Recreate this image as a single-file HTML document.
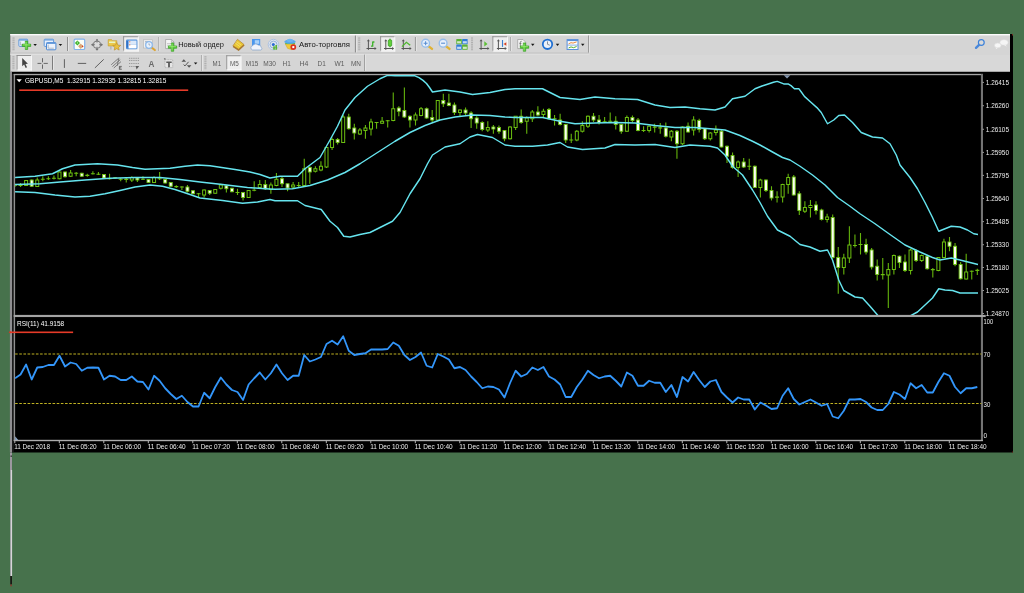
<!DOCTYPE html><html><head><meta charset="utf-8"><title>chart</title><style>
html,body{margin:0;padding:0;background:#47724c;width:1024px;height:593px;overflow:hidden}
svg{display:block;position:absolute;left:0;top:0;filter:blur(0.45px)}
text{font-family:"Liberation Sans",sans-serif}
</style></head><body>
<svg width="1024" height="593" viewBox="0 0 1024 593">
<rect x="0" y="0" width="1024" height="593" fill="#47724c"/>
<rect x="10" y="34" width="1003" height="418.5" fill="#000"/>
<rect x="10" y="452.5" width="2" height="18" fill="#9c98a0"/>
<rect x="10" y="470" width="0.8" height="106" fill="#97959b"/>
<rect x="10.7" y="470" width="1.4" height="106" fill="#d8d5d9"/>
<rect x="10.3" y="576" width="1.6" height="8.5" fill="#141010"/>
<rect x="10.3" y="584.5" width="1.6" height="1.8" fill="#8a3a30"/>
<rect x="10.6" y="455.5" width="1.2" height="1.4" fill="#222"/>
<rect x="10.2" y="34" width="999.8" height="38" fill="#d5d5d5"/>
<rect x="10.2" y="34" width="999.8" height="1.4" fill="#fbfbfb"/>
<rect x="10.2" y="52.4" width="578.6" height="1.4" fill="#c5c5c5"/>
<rect x="10.2" y="53.8" width="579.4" height="1" fill="#e3e3e3"/>
<rect x="365.6" y="54.8" width="644.4" height="16.4" fill="#d8d8d8"/>
<rect x="10.2" y="71.2" width="999.8" height="0.8" fill="#9a9a9a"/>
<rect x="1012" y="34" width="1" height="1.5" fill="#7a2a20"/>
<rect x="1012.1" y="451.6" width="0.9" height="0.9" fill="#8a2218"/>
<rect x="9.9" y="72" width="2.1" height="380.5" fill="#8f8e91"/>
<rect x="12" y="74" width="1.8" height="378" fill="#1b1b1b"/>
<rect x="13.7" y="74" width="1.4" height="367" fill="#909090"/>
<rect x="13.7" y="73.85" width="969.3" height="1.35" fill="#a6a6a6"/>
<rect x="980.9" y="74" width="2.1" height="367" fill="#747474"/>
<rect x="13.7" y="439.8" width="969.3" height="1.4" fill="#acacac"/>
<rect x="13.7" y="314.9" width="972" height="2.15" fill="#a4a4a4"/>
<defs><clipPath id="cm"><rect x="15.1" y="75.1" width="966.3" height="239.9"/></clipPath>
<clipPath id="cr"><rect x="15.1" y="317" width="966.3" height="122.9"/></clipPath></defs>
<g clip-path="url(#cm)" shape-rendering="auto">
<line x1="15.00" y1="183.75" x2="15.00" y2="187.00" stroke="#64b40c" stroke-width="1.1"/>
<line x1="13.00" y1="185.12" x2="17.00" y2="185.12" stroke="#6cc010" stroke-width="1.05"/>
<line x1="20.56" y1="183.00" x2="20.56" y2="187.00" stroke="#64b40c" stroke-width="1.1"/>
<line x1="18.56" y1="185.38" x2="22.56" y2="185.38" stroke="#6cc010" stroke-width="1.05"/>
<line x1="26.12" y1="180.00" x2="26.12" y2="186.00" stroke="#64b40c" stroke-width="1.1"/>
<rect x="24.62" y="180.50" width="3" height="5.00" fill="#000" stroke="#6cc010" stroke-width="1"/>
<line x1="31.69" y1="179.50" x2="31.69" y2="186.75" stroke="#64b40c" stroke-width="1.1"/>
<rect x="30.19" y="180.00" width="3" height="6.25" fill="#fcfff4" stroke="#6cc010" stroke-width="0.9"/>
<line x1="37.25" y1="177.50" x2="37.25" y2="187.00" stroke="#64b40c" stroke-width="1.1"/>
<rect x="35.75" y="180.00" width="3" height="6.50" fill="#000" stroke="#6cc010" stroke-width="1"/>
<line x1="42.81" y1="176.25" x2="42.81" y2="181.25" stroke="#64b40c" stroke-width="1.1"/>
<line x1="40.81" y1="179.25" x2="44.81" y2="179.25" stroke="#6cc010" stroke-width="1.05"/>
<line x1="48.38" y1="176.25" x2="48.38" y2="180.00" stroke="#64b40c" stroke-width="1.1"/>
<line x1="46.38" y1="178.75" x2="50.38" y2="178.75" stroke="#6cc010" stroke-width="1.05"/>
<line x1="53.94" y1="175.50" x2="53.94" y2="179.50" stroke="#64b40c" stroke-width="1.1"/>
<line x1="51.94" y1="178.25" x2="55.94" y2="178.25" stroke="#6cc010" stroke-width="1.05"/>
<line x1="59.50" y1="171.50" x2="59.50" y2="179.25" stroke="#64b40c" stroke-width="1.1"/>
<rect x="58.00" y="172.00" width="3" height="6.75" fill="#000" stroke="#6cc010" stroke-width="1"/>
<line x1="65.06" y1="171.50" x2="65.06" y2="177.50" stroke="#64b40c" stroke-width="1.1"/>
<rect x="63.56" y="172.00" width="3" height="4.75" fill="#fcfff4" stroke="#6cc010" stroke-width="0.9"/>
<line x1="70.62" y1="170.00" x2="70.62" y2="177.00" stroke="#64b40c" stroke-width="1.1"/>
<rect x="69.12" y="173.00" width="3" height="3.25" fill="#000" stroke="#6cc010" stroke-width="1"/>
<line x1="76.19" y1="172.00" x2="76.19" y2="176.25" stroke="#64b40c" stroke-width="1.1"/>
<line x1="74.19" y1="173.25" x2="78.19" y2="173.25" stroke="#6cc010" stroke-width="1.05"/>
<line x1="81.75" y1="172.75" x2="81.75" y2="176.75" stroke="#64b40c" stroke-width="1.1"/>
<rect x="80.25" y="173.25" width="3" height="3.00" fill="#fcfff4" stroke="#6cc010" stroke-width="0.9"/>
<line x1="87.31" y1="173.75" x2="87.31" y2="176.75" stroke="#64b40c" stroke-width="1.1"/>
<line x1="85.31" y1="175.38" x2="89.31" y2="175.38" stroke="#6cc010" stroke-width="1.05"/>
<line x1="92.88" y1="171.25" x2="92.88" y2="174.50" stroke="#64b40c" stroke-width="1.1"/>
<line x1="90.88" y1="173.75" x2="94.88" y2="173.75" stroke="#6cc010" stroke-width="1.05"/>
<line x1="98.44" y1="172.00" x2="98.44" y2="175.00" stroke="#64b40c" stroke-width="1.1"/>
<line x1="96.44" y1="174.25" x2="100.44" y2="174.25" stroke="#6cc010" stroke-width="1.05"/>
<line x1="104.00" y1="174.00" x2="104.00" y2="178.50" stroke="#64b40c" stroke-width="1.1"/>
<rect x="102.50" y="174.50" width="3" height="3.50" fill="#fcfff4" stroke="#6cc010" stroke-width="0.9"/>
<line x1="109.56" y1="173.75" x2="109.56" y2="179.50" stroke="#64b40c" stroke-width="1.1"/>
<line x1="107.56" y1="178.75" x2="111.56" y2="178.75" stroke="#6cc010" stroke-width="1.05"/>
<line x1="115.12" y1="177.00" x2="115.12" y2="178.50" stroke="#64b40c" stroke-width="1.1"/>
<line x1="113.12" y1="177.75" x2="117.12" y2="177.75" stroke="#6cc010" stroke-width="1.05"/>
<line x1="120.69" y1="178.00" x2="120.69" y2="181.25" stroke="#64b40c" stroke-width="1.1"/>
<line x1="118.69" y1="179.25" x2="122.69" y2="179.25" stroke="#6cc010" stroke-width="1.05"/>
<line x1="126.25" y1="177.00" x2="126.25" y2="182.50" stroke="#64b40c" stroke-width="1.1"/>
<line x1="124.25" y1="179.38" x2="128.25" y2="179.38" stroke="#6cc010" stroke-width="1.05"/>
<line x1="131.81" y1="176.25" x2="131.81" y2="182.00" stroke="#64b40c" stroke-width="1.1"/>
<rect x="130.31" y="177.50" width="3" height="2.50" fill="#000" stroke="#6cc010" stroke-width="1"/>
<line x1="137.38" y1="177.00" x2="137.38" y2="182.00" stroke="#64b40c" stroke-width="1.1"/>
<rect x="135.88" y="178.00" width="3" height="2.00" fill="#fcfff4" stroke="#6cc010" stroke-width="0.9"/>
<line x1="142.94" y1="176.25" x2="142.94" y2="180.00" stroke="#64b40c" stroke-width="1.1"/>
<line x1="140.94" y1="179.25" x2="144.94" y2="179.25" stroke="#6cc010" stroke-width="1.05"/>
<line x1="148.50" y1="179.00" x2="148.50" y2="183.00" stroke="#64b40c" stroke-width="1.1"/>
<rect x="147.00" y="179.50" width="3" height="3.00" fill="#fcfff4" stroke="#6cc010" stroke-width="0.9"/>
<line x1="154.06" y1="176.25" x2="154.06" y2="183.00" stroke="#64b40c" stroke-width="1.1"/>
<rect x="152.56" y="177.50" width="3" height="5.00" fill="#000" stroke="#6cc010" stroke-width="1"/>
<line x1="159.62" y1="172.00" x2="159.62" y2="180.00" stroke="#64b40c" stroke-width="1.1"/>
<line x1="157.62" y1="178.75" x2="161.62" y2="178.75" stroke="#6cc010" stroke-width="1.05"/>
<line x1="165.19" y1="179.00" x2="165.19" y2="183.50" stroke="#64b40c" stroke-width="1.1"/>
<rect x="163.69" y="179.50" width="3" height="3.50" fill="#fcfff4" stroke="#6cc010" stroke-width="0.9"/>
<line x1="170.75" y1="182.00" x2="170.75" y2="186.75" stroke="#64b40c" stroke-width="1.1"/>
<rect x="169.25" y="182.50" width="3" height="3.75" fill="#fcfff4" stroke="#6cc010" stroke-width="0.9"/>
<line x1="176.31" y1="185.25" x2="176.31" y2="188.00" stroke="#64b40c" stroke-width="1.1"/>
<line x1="174.31" y1="186.62" x2="178.31" y2="186.62" stroke="#6cc010" stroke-width="1.05"/>
<line x1="181.88" y1="186.25" x2="181.88" y2="190.00" stroke="#64b40c" stroke-width="1.1"/>
<line x1="179.88" y1="187.00" x2="183.88" y2="187.00" stroke="#6cc010" stroke-width="1.05"/>
<line x1="187.44" y1="185.00" x2="187.44" y2="192.50" stroke="#64b40c" stroke-width="1.1"/>
<rect x="185.94" y="187.00" width="3" height="4.25" fill="#fcfff4" stroke="#6cc010" stroke-width="0.9"/>
<line x1="193.00" y1="190.25" x2="193.00" y2="194.25" stroke="#64b40c" stroke-width="1.1"/>
<rect x="191.50" y="190.75" width="3" height="3.00" fill="#fcfff4" stroke="#6cc010" stroke-width="0.9"/>
<line x1="198.56" y1="193.00" x2="198.56" y2="197.50" stroke="#64b40c" stroke-width="1.1"/>
<line x1="196.56" y1="193.75" x2="200.56" y2="193.75" stroke="#6cc010" stroke-width="1.05"/>
<line x1="204.12" y1="189.50" x2="204.12" y2="197.50" stroke="#64b40c" stroke-width="1.1"/>
<rect x="202.62" y="190.00" width="3" height="5.00" fill="#000" stroke="#6cc010" stroke-width="1"/>
<line x1="209.69" y1="190.00" x2="209.69" y2="195.00" stroke="#64b40c" stroke-width="1.1"/>
<rect x="208.19" y="190.50" width="3" height="2.75" fill="#fcfff4" stroke="#6cc010" stroke-width="0.9"/>
<line x1="215.25" y1="189.00" x2="215.25" y2="193.75" stroke="#64b40c" stroke-width="1.1"/>
<rect x="213.75" y="189.50" width="3" height="3.75" fill="#000" stroke="#6cc010" stroke-width="1"/>
<line x1="220.81" y1="183.75" x2="220.81" y2="189.50" stroke="#64b40c" stroke-width="1.1"/>
<rect x="219.31" y="185.00" width="3" height="3.25" fill="#000" stroke="#6cc010" stroke-width="1"/>
<line x1="226.38" y1="185.00" x2="226.38" y2="192.50" stroke="#64b40c" stroke-width="1.1"/>
<rect x="224.88" y="185.75" width="3" height="3.00" fill="#fcfff4" stroke="#6cc010" stroke-width="0.9"/>
<line x1="231.94" y1="187.75" x2="231.94" y2="192.25" stroke="#64b40c" stroke-width="1.1"/>
<rect x="230.44" y="188.25" width="3" height="3.50" fill="#fcfff4" stroke="#6cc010" stroke-width="0.9"/>
<line x1="237.50" y1="188.75" x2="237.50" y2="195.00" stroke="#64b40c" stroke-width="1.1"/>
<line x1="235.50" y1="192.50" x2="239.50" y2="192.50" stroke="#6cc010" stroke-width="1.05"/>
<line x1="243.06" y1="192.00" x2="243.06" y2="200.50" stroke="#64b40c" stroke-width="1.1"/>
<rect x="241.56" y="192.50" width="3" height="5.00" fill="#fcfff4" stroke="#6cc010" stroke-width="0.9"/>
<line x1="248.62" y1="190.00" x2="248.62" y2="198.00" stroke="#64b40c" stroke-width="1.1"/>
<rect x="247.12" y="190.50" width="3" height="7.00" fill="#000" stroke="#6cc010" stroke-width="1"/>
<line x1="254.19" y1="181.25" x2="254.19" y2="191.25" stroke="#64b40c" stroke-width="1.1"/>
<line x1="252.19" y1="190.25" x2="256.19" y2="190.25" stroke="#6cc010" stroke-width="1.05"/>
<line x1="259.75" y1="180.00" x2="259.75" y2="188.00" stroke="#64b40c" stroke-width="1.1"/>
<rect x="258.25" y="184.50" width="3" height="3.00" fill="#000" stroke="#6cc010" stroke-width="1"/>
<line x1="265.31" y1="180.00" x2="265.31" y2="190.00" stroke="#64b40c" stroke-width="1.1"/>
<rect x="263.81" y="184.50" width="3" height="4.25" fill="#fcfff4" stroke="#6cc010" stroke-width="0.9"/>
<line x1="270.88" y1="182.50" x2="270.88" y2="193.75" stroke="#64b40c" stroke-width="1.1"/>
<rect x="269.38" y="185.00" width="3" height="4.50" fill="#000" stroke="#6cc010" stroke-width="1"/>
<line x1="276.44" y1="173.00" x2="276.44" y2="186.25" stroke="#64b40c" stroke-width="1.1"/>
<rect x="274.94" y="179.25" width="3" height="6.25" fill="#000" stroke="#6cc010" stroke-width="1"/>
<line x1="282.00" y1="177.00" x2="282.00" y2="187.00" stroke="#64b40c" stroke-width="1.1"/>
<rect x="280.50" y="178.75" width="3" height="5.00" fill="#fcfff4" stroke="#6cc010" stroke-width="0.9"/>
<line x1="287.56" y1="183.75" x2="287.56" y2="191.25" stroke="#64b40c" stroke-width="1.1"/>
<rect x="286.06" y="183.75" width="3" height="4.25" fill="#fcfff4" stroke="#6cc010" stroke-width="0.9"/>
<line x1="293.12" y1="182.00" x2="293.12" y2="188.75" stroke="#64b40c" stroke-width="1.1"/>
<rect x="291.62" y="185.00" width="3" height="2.00" fill="#000" stroke="#6cc010" stroke-width="1"/>
<line x1="298.69" y1="182.00" x2="298.69" y2="188.00" stroke="#64b40c" stroke-width="1.1"/>
<line x1="296.69" y1="185.50" x2="300.69" y2="185.50" stroke="#6cc010" stroke-width="1.05"/>
<line x1="304.25" y1="158.75" x2="304.25" y2="186.25" stroke="#64b40c" stroke-width="1.1"/>
<rect x="302.75" y="168.75" width="3" height="16.75" fill="#000" stroke="#6cc010" stroke-width="1"/>
<line x1="309.81" y1="166.25" x2="309.81" y2="183.75" stroke="#64b40c" stroke-width="1.1"/>
<rect x="308.31" y="167.50" width="3" height="4.50" fill="#fcfff4" stroke="#6cc010" stroke-width="0.9"/>
<line x1="315.38" y1="166.25" x2="315.38" y2="172.50" stroke="#64b40c" stroke-width="1.1"/>
<rect x="313.88" y="168.75" width="3" height="2.50" fill="#000" stroke="#6cc010" stroke-width="1"/>
<line x1="320.94" y1="161.25" x2="320.94" y2="171.25" stroke="#64b40c" stroke-width="1.1"/>
<rect x="319.44" y="166.25" width="3" height="3.75" fill="#000" stroke="#6cc010" stroke-width="1"/>
<line x1="326.50" y1="147.50" x2="326.50" y2="168.00" stroke="#64b40c" stroke-width="1.1"/>
<rect x="325.00" y="147.50" width="3" height="19.50" fill="#000" stroke="#6cc010" stroke-width="1"/>
<line x1="332.06" y1="137.50" x2="332.06" y2="150.00" stroke="#64b40c" stroke-width="1.1"/>
<rect x="330.56" y="139.50" width="3" height="8.00" fill="#000" stroke="#6cc010" stroke-width="1"/>
<line x1="337.62" y1="138.00" x2="337.62" y2="144.50" stroke="#64b40c" stroke-width="1.1"/>
<rect x="336.12" y="139.50" width="3" height="3.00" fill="#fcfff4" stroke="#6cc010" stroke-width="0.9"/>
<line x1="343.19" y1="115.00" x2="343.19" y2="143.00" stroke="#64b40c" stroke-width="1.1"/>
<rect x="341.69" y="117.00" width="3" height="25.50" fill="#000" stroke="#6cc010" stroke-width="1"/>
<line x1="348.75" y1="113.75" x2="348.75" y2="129.50" stroke="#64b40c" stroke-width="1.1"/>
<rect x="347.25" y="117.00" width="3" height="11.75" fill="#fcfff4" stroke="#6cc010" stroke-width="0.9"/>
<line x1="354.31" y1="123.75" x2="354.31" y2="139.50" stroke="#64b40c" stroke-width="1.1"/>
<rect x="352.81" y="128.00" width="3" height="5.00" fill="#fcfff4" stroke="#6cc010" stroke-width="0.9"/>
<line x1="359.88" y1="128.00" x2="359.88" y2="135.00" stroke="#64b40c" stroke-width="1.1"/>
<rect x="358.38" y="130.00" width="3" height="4.00" fill="#000" stroke="#6cc010" stroke-width="1"/>
<line x1="365.44" y1="125.00" x2="365.44" y2="138.75" stroke="#64b40c" stroke-width="1.1"/>
<rect x="363.94" y="128.00" width="3" height="2.50" fill="#000" stroke="#6cc010" stroke-width="1"/>
<line x1="371.00" y1="118.75" x2="371.00" y2="135.50" stroke="#64b40c" stroke-width="1.1"/>
<rect x="369.50" y="122.00" width="3" height="7.00" fill="#000" stroke="#6cc010" stroke-width="1"/>
<line x1="376.56" y1="122.00" x2="376.56" y2="128.75" stroke="#64b40c" stroke-width="1.1"/>
<line x1="374.56" y1="122.50" x2="378.56" y2="122.50" stroke="#6cc010" stroke-width="1.05"/>
<line x1="382.12" y1="117.00" x2="382.12" y2="123.75" stroke="#64b40c" stroke-width="1.1"/>
<rect x="380.62" y="121.25" width="3" height="2.00" fill="#000" stroke="#6cc010" stroke-width="1"/>
<line x1="387.69" y1="120.00" x2="387.69" y2="127.50" stroke="#64b40c" stroke-width="1.1"/>
<line x1="385.69" y1="120.75" x2="389.69" y2="120.75" stroke="#6cc010" stroke-width="1.05"/>
<line x1="393.25" y1="92.50" x2="393.25" y2="121.25" stroke="#64b40c" stroke-width="1.1"/>
<rect x="391.75" y="108.75" width="3" height="11.75" fill="#000" stroke="#6cc010" stroke-width="1"/>
<line x1="398.81" y1="106.25" x2="398.81" y2="116.25" stroke="#64b40c" stroke-width="1.1"/>
<rect x="397.31" y="108.00" width="3" height="3.25" fill="#fcfff4" stroke="#6cc010" stroke-width="0.9"/>
<line x1="404.38" y1="87.50" x2="404.38" y2="118.00" stroke="#64b40c" stroke-width="1.1"/>
<rect x="402.88" y="110.50" width="3" height="6.50" fill="#fcfff4" stroke="#6cc010" stroke-width="0.9"/>
<line x1="409.94" y1="115.50" x2="409.94" y2="127.50" stroke="#64b40c" stroke-width="1.1"/>
<rect x="408.44" y="116.25" width="3" height="3.75" fill="#fcfff4" stroke="#6cc010" stroke-width="0.9"/>
<line x1="415.50" y1="112.50" x2="415.50" y2="125.50" stroke="#64b40c" stroke-width="1.1"/>
<rect x="414.00" y="115.00" width="3" height="5.00" fill="#000" stroke="#6cc010" stroke-width="1"/>
<line x1="421.06" y1="107.00" x2="421.06" y2="116.25" stroke="#64b40c" stroke-width="1.1"/>
<rect x="419.56" y="108.75" width="3" height="6.75" fill="#000" stroke="#6cc010" stroke-width="1"/>
<line x1="426.62" y1="107.50" x2="426.62" y2="118.75" stroke="#64b40c" stroke-width="1.1"/>
<rect x="425.12" y="108.75" width="3" height="9.25" fill="#fcfff4" stroke="#6cc010" stroke-width="0.9"/>
<line x1="432.19" y1="110.00" x2="432.19" y2="122.00" stroke="#64b40c" stroke-width="1.1"/>
<rect x="430.69" y="117.50" width="3" height="2.50" fill="#fcfff4" stroke="#6cc010" stroke-width="0.9"/>
<line x1="437.75" y1="100.00" x2="437.75" y2="121.25" stroke="#64b40c" stroke-width="1.1"/>
<rect x="436.25" y="100.50" width="3" height="19.50" fill="#000" stroke="#6cc010" stroke-width="1"/>
<line x1="443.31" y1="93.75" x2="443.31" y2="107.00" stroke="#64b40c" stroke-width="1.1"/>
<rect x="441.81" y="100.50" width="3" height="3.25" fill="#fcfff4" stroke="#6cc010" stroke-width="0.9"/>
<line x1="448.88" y1="93.75" x2="448.88" y2="106.25" stroke="#64b40c" stroke-width="1.1"/>
<rect x="447.38" y="103.00" width="3" height="2.50" fill="#fcfff4" stroke="#6cc010" stroke-width="0.9"/>
<line x1="454.44" y1="102.50" x2="454.44" y2="115.00" stroke="#64b40c" stroke-width="1.1"/>
<rect x="452.94" y="105.00" width="3" height="7.50" fill="#fcfff4" stroke="#6cc010" stroke-width="0.9"/>
<line x1="460.00" y1="109.50" x2="460.00" y2="116.25" stroke="#64b40c" stroke-width="1.1"/>
<rect x="458.50" y="110.00" width="3" height="2.50" fill="#000" stroke="#6cc010" stroke-width="1"/>
<line x1="465.56" y1="107.50" x2="465.56" y2="115.00" stroke="#64b40c" stroke-width="1.1"/>
<rect x="464.06" y="110.00" width="3" height="3.00" fill="#fcfff4" stroke="#6cc010" stroke-width="0.9"/>
<line x1="471.12" y1="111.25" x2="471.12" y2="128.00" stroke="#64b40c" stroke-width="1.1"/>
<rect x="469.62" y="113.00" width="3" height="5.75" fill="#fcfff4" stroke="#6cc010" stroke-width="0.9"/>
<line x1="476.69" y1="116.25" x2="476.69" y2="128.75" stroke="#64b40c" stroke-width="1.1"/>
<rect x="475.19" y="118.00" width="3" height="5.00" fill="#fcfff4" stroke="#6cc010" stroke-width="0.9"/>
<line x1="482.25" y1="121.25" x2="482.25" y2="131.25" stroke="#64b40c" stroke-width="1.1"/>
<rect x="480.75" y="122.50" width="3" height="7.00" fill="#fcfff4" stroke="#6cc010" stroke-width="0.9"/>
<line x1="487.81" y1="121.25" x2="487.81" y2="132.00" stroke="#64b40c" stroke-width="1.1"/>
<rect x="486.31" y="127.50" width="3" height="2.50" fill="#000" stroke="#6cc010" stroke-width="1"/>
<line x1="493.38" y1="125.00" x2="493.38" y2="133.75" stroke="#64b40c" stroke-width="1.1"/>
<rect x="491.88" y="127.00" width="3" height="2.00" fill="#fcfff4" stroke="#6cc010" stroke-width="0.9"/>
<line x1="498.94" y1="125.50" x2="498.94" y2="133.75" stroke="#64b40c" stroke-width="1.1"/>
<rect x="497.44" y="127.50" width="3" height="3.75" fill="#fcfff4" stroke="#6cc010" stroke-width="0.9"/>
<line x1="504.50" y1="130.00" x2="504.50" y2="141.25" stroke="#64b40c" stroke-width="1.1"/>
<rect x="503.00" y="130.50" width="3" height="8.25" fill="#fcfff4" stroke="#6cc010" stroke-width="0.9"/>
<line x1="510.06" y1="126.25" x2="510.06" y2="139.50" stroke="#64b40c" stroke-width="1.1"/>
<rect x="508.56" y="127.00" width="3" height="11.75" fill="#000" stroke="#6cc010" stroke-width="1"/>
<line x1="515.62" y1="116.25" x2="515.62" y2="130.00" stroke="#64b40c" stroke-width="1.1"/>
<rect x="514.12" y="116.25" width="3" height="11.25" fill="#000" stroke="#6cc010" stroke-width="1"/>
<line x1="521.19" y1="109.50" x2="521.19" y2="123.75" stroke="#64b40c" stroke-width="1.1"/>
<rect x="519.69" y="116.25" width="3" height="6.25" fill="#fcfff4" stroke="#6cc010" stroke-width="0.9"/>
<line x1="526.75" y1="116.25" x2="526.75" y2="133.75" stroke="#64b40c" stroke-width="1.1"/>
<rect x="525.25" y="118.00" width="3" height="3.25" fill="#000" stroke="#6cc010" stroke-width="1"/>
<line x1="532.31" y1="110.00" x2="532.31" y2="122.00" stroke="#64b40c" stroke-width="1.1"/>
<rect x="530.81" y="112.00" width="3" height="6.75" fill="#000" stroke="#6cc010" stroke-width="1"/>
<line x1="537.88" y1="106.25" x2="537.88" y2="116.25" stroke="#64b40c" stroke-width="1.1"/>
<rect x="536.38" y="112.00" width="3" height="3.00" fill="#fcfff4" stroke="#6cc010" stroke-width="0.9"/>
<line x1="543.44" y1="108.75" x2="543.44" y2="117.00" stroke="#64b40c" stroke-width="1.1"/>
<rect x="541.94" y="111.25" width="3" height="3.25" fill="#000" stroke="#6cc010" stroke-width="1"/>
<line x1="549.00" y1="108.00" x2="549.00" y2="119.50" stroke="#64b40c" stroke-width="1.1"/>
<rect x="547.50" y="109.50" width="3" height="9.25" fill="#fcfff4" stroke="#6cc010" stroke-width="0.9"/>
<line x1="554.56" y1="115.00" x2="554.56" y2="125.50" stroke="#64b40c" stroke-width="1.1"/>
<line x1="552.56" y1="118.75" x2="556.56" y2="118.75" stroke="#6cc010" stroke-width="1.05"/>
<line x1="560.12" y1="113.75" x2="560.12" y2="125.50" stroke="#64b40c" stroke-width="1.1"/>
<rect x="558.62" y="120.00" width="3" height="4.50" fill="#fcfff4" stroke="#6cc010" stroke-width="0.9"/>
<line x1="565.69" y1="123.75" x2="565.69" y2="143.00" stroke="#64b40c" stroke-width="1.1"/>
<rect x="564.19" y="124.50" width="3" height="15.50" fill="#fcfff4" stroke="#6cc010" stroke-width="0.9"/>
<line x1="571.25" y1="133.75" x2="571.25" y2="143.00" stroke="#64b40c" stroke-width="1.1"/>
<line x1="569.25" y1="140.00" x2="573.25" y2="140.00" stroke="#6cc010" stroke-width="1.05"/>
<line x1="576.81" y1="130.00" x2="576.81" y2="141.25" stroke="#64b40c" stroke-width="1.1"/>
<rect x="575.31" y="131.25" width="3" height="8.75" fill="#000" stroke="#6cc010" stroke-width="1"/>
<line x1="582.38" y1="121.25" x2="582.38" y2="132.50" stroke="#64b40c" stroke-width="1.1"/>
<rect x="580.88" y="125.50" width="3" height="5.75" fill="#000" stroke="#6cc010" stroke-width="1"/>
<line x1="587.94" y1="115.50" x2="587.94" y2="128.00" stroke="#64b40c" stroke-width="1.1"/>
<rect x="586.44" y="116.25" width="3" height="10.00" fill="#000" stroke="#6cc010" stroke-width="1"/>
<line x1="593.50" y1="113.00" x2="593.50" y2="122.00" stroke="#64b40c" stroke-width="1.1"/>
<rect x="592.00" y="116.25" width="3" height="3.75" fill="#fcfff4" stroke="#6cc010" stroke-width="0.9"/>
<line x1="599.06" y1="115.00" x2="599.06" y2="124.50" stroke="#64b40c" stroke-width="1.1"/>
<rect x="597.56" y="120.00" width="3" height="2.50" fill="#fcfff4" stroke="#6cc010" stroke-width="0.9"/>
<line x1="604.62" y1="117.00" x2="604.62" y2="123.00" stroke="#64b40c" stroke-width="1.1"/>
<line x1="602.62" y1="121.75" x2="606.62" y2="121.75" stroke="#6cc010" stroke-width="1.05"/>
<line x1="610.19" y1="112.50" x2="610.19" y2="122.50" stroke="#64b40c" stroke-width="1.1"/>
<line x1="608.19" y1="121.25" x2="612.19" y2="121.25" stroke="#6cc010" stroke-width="1.05"/>
<line x1="615.75" y1="116.25" x2="615.75" y2="129.50" stroke="#64b40c" stroke-width="1.1"/>
<rect x="614.25" y="121.25" width="3" height="3.25" fill="#fcfff4" stroke="#6cc010" stroke-width="0.9"/>
<line x1="621.31" y1="123.75" x2="621.31" y2="133.75" stroke="#64b40c" stroke-width="1.1"/>
<rect x="619.81" y="124.50" width="3" height="6.75" fill="#fcfff4" stroke="#6cc010" stroke-width="0.9"/>
<line x1="626.88" y1="115.50" x2="626.88" y2="132.00" stroke="#64b40c" stroke-width="1.1"/>
<rect x="625.38" y="117.50" width="3" height="13.75" fill="#000" stroke="#6cc010" stroke-width="1"/>
<line x1="632.44" y1="115.50" x2="632.44" y2="122.50" stroke="#64b40c" stroke-width="1.1"/>
<rect x="630.94" y="117.50" width="3" height="3.00" fill="#fcfff4" stroke="#6cc010" stroke-width="0.9"/>
<line x1="638.00" y1="118.00" x2="638.00" y2="131.25" stroke="#64b40c" stroke-width="1.1"/>
<rect x="636.50" y="120.00" width="3" height="10.50" fill="#fcfff4" stroke="#6cc010" stroke-width="0.9"/>
<line x1="643.56" y1="126.25" x2="643.56" y2="132.00" stroke="#64b40c" stroke-width="1.1"/>
<line x1="641.56" y1="130.50" x2="645.56" y2="130.50" stroke="#6cc010" stroke-width="1.05"/>
<line x1="649.12" y1="125.50" x2="649.12" y2="132.50" stroke="#64b40c" stroke-width="1.1"/>
<rect x="647.62" y="126.25" width="3" height="4.25" fill="#000" stroke="#6cc010" stroke-width="1"/>
<line x1="654.69" y1="123.75" x2="654.69" y2="132.50" stroke="#64b40c" stroke-width="1.1"/>
<line x1="652.69" y1="127.12" x2="656.69" y2="127.12" stroke="#6cc010" stroke-width="1.05"/>
<line x1="660.25" y1="123.00" x2="660.25" y2="133.75" stroke="#64b40c" stroke-width="1.1"/>
<line x1="658.25" y1="127.88" x2="662.25" y2="127.88" stroke="#6cc010" stroke-width="1.05"/>
<line x1="665.81" y1="122.50" x2="665.81" y2="137.50" stroke="#64b40c" stroke-width="1.1"/>
<rect x="664.31" y="128.00" width="3" height="8.25" fill="#fcfff4" stroke="#6cc010" stroke-width="0.9"/>
<line x1="671.38" y1="130.00" x2="671.38" y2="141.25" stroke="#64b40c" stroke-width="1.1"/>
<rect x="669.88" y="131.25" width="3" height="5.75" fill="#000" stroke="#6cc010" stroke-width="1"/>
<line x1="676.94" y1="130.00" x2="676.94" y2="158.75" stroke="#64b40c" stroke-width="1.1"/>
<rect x="675.44" y="131.25" width="3" height="12.50" fill="#fcfff4" stroke="#6cc010" stroke-width="0.9"/>
<line x1="682.50" y1="126.25" x2="682.50" y2="145.00" stroke="#64b40c" stroke-width="1.1"/>
<rect x="681.00" y="127.00" width="3" height="16.75" fill="#000" stroke="#6cc010" stroke-width="1"/>
<line x1="688.06" y1="122.50" x2="688.06" y2="132.50" stroke="#64b40c" stroke-width="1.1"/>
<rect x="686.56" y="126.25" width="3" height="5.75" fill="#fcfff4" stroke="#6cc010" stroke-width="0.9"/>
<line x1="693.62" y1="116.25" x2="693.62" y2="135.50" stroke="#64b40c" stroke-width="1.1"/>
<rect x="692.12" y="120.00" width="3" height="10.00" fill="#000" stroke="#6cc010" stroke-width="1"/>
<line x1="699.19" y1="118.75" x2="699.19" y2="132.50" stroke="#64b40c" stroke-width="1.1"/>
<rect x="697.69" y="120.50" width="3" height="9.00" fill="#fcfff4" stroke="#6cc010" stroke-width="0.9"/>
<line x1="704.75" y1="128.00" x2="704.75" y2="140.00" stroke="#64b40c" stroke-width="1.1"/>
<rect x="703.25" y="128.75" width="3" height="10.00" fill="#fcfff4" stroke="#6cc010" stroke-width="0.9"/>
<line x1="710.31" y1="132.00" x2="710.31" y2="140.50" stroke="#64b40c" stroke-width="1.1"/>
<rect x="708.81" y="133.00" width="3" height="5.75" fill="#000" stroke="#6cc010" stroke-width="1"/>
<line x1="715.88" y1="125.50" x2="715.88" y2="135.50" stroke="#64b40c" stroke-width="1.1"/>
<rect x="714.38" y="130.00" width="3" height="2.50" fill="#000" stroke="#6cc010" stroke-width="1"/>
<line x1="721.44" y1="130.00" x2="721.44" y2="147.50" stroke="#64b40c" stroke-width="1.1"/>
<rect x="719.94" y="131.25" width="3" height="15.75" fill="#fcfff4" stroke="#6cc010" stroke-width="0.9"/>
<line x1="727.00" y1="145.50" x2="727.00" y2="163.00" stroke="#64b40c" stroke-width="1.1"/>
<rect x="725.50" y="146.25" width="3" height="10.00" fill="#fcfff4" stroke="#6cc010" stroke-width="0.9"/>
<line x1="732.56" y1="152.50" x2="732.56" y2="168.75" stroke="#64b40c" stroke-width="1.1"/>
<rect x="731.06" y="155.50" width="3" height="12.00" fill="#fcfff4" stroke="#6cc010" stroke-width="0.9"/>
<line x1="738.12" y1="160.50" x2="738.12" y2="177.00" stroke="#64b40c" stroke-width="1.1"/>
<rect x="736.62" y="162.00" width="3" height="5.50" fill="#000" stroke="#6cc010" stroke-width="1"/>
<line x1="743.69" y1="158.00" x2="743.69" y2="168.00" stroke="#64b40c" stroke-width="1.1"/>
<rect x="742.19" y="162.00" width="3" height="5.00" fill="#fcfff4" stroke="#6cc010" stroke-width="0.9"/>
<line x1="749.25" y1="158.75" x2="749.25" y2="170.00" stroke="#64b40c" stroke-width="1.1"/>
<line x1="747.25" y1="166.25" x2="751.25" y2="166.25" stroke="#6cc010" stroke-width="1.05"/>
<line x1="754.81" y1="165.50" x2="754.81" y2="188.00" stroke="#64b40c" stroke-width="1.1"/>
<rect x="753.31" y="166.25" width="3" height="21.25" fill="#fcfff4" stroke="#6cc010" stroke-width="0.9"/>
<line x1="760.38" y1="178.75" x2="760.38" y2="197.50" stroke="#64b40c" stroke-width="1.1"/>
<rect x="758.88" y="180.00" width="3" height="7.50" fill="#000" stroke="#6cc010" stroke-width="1"/>
<line x1="765.94" y1="179.50" x2="765.94" y2="192.00" stroke="#64b40c" stroke-width="1.1"/>
<rect x="764.44" y="180.00" width="3" height="10.50" fill="#fcfff4" stroke="#6cc010" stroke-width="0.9"/>
<line x1="771.50" y1="186.25" x2="771.50" y2="200.50" stroke="#64b40c" stroke-width="1.1"/>
<rect x="770.00" y="190.50" width="3" height="7.50" fill="#fcfff4" stroke="#6cc010" stroke-width="0.9"/>
<line x1="777.06" y1="191.25" x2="777.06" y2="202.50" stroke="#64b40c" stroke-width="1.1"/>
<line x1="775.06" y1="197.12" x2="779.06" y2="197.12" stroke="#6cc010" stroke-width="1.05"/>
<line x1="782.62" y1="183.75" x2="782.62" y2="202.50" stroke="#64b40c" stroke-width="1.1"/>
<rect x="781.12" y="184.50" width="3" height="12.50" fill="#000" stroke="#6cc010" stroke-width="1"/>
<line x1="788.19" y1="173.75" x2="788.19" y2="193.75" stroke="#64b40c" stroke-width="1.1"/>
<rect x="786.69" y="177.50" width="3" height="7.00" fill="#000" stroke="#6cc010" stroke-width="1"/>
<line x1="793.75" y1="175.00" x2="793.75" y2="195.50" stroke="#64b40c" stroke-width="1.1"/>
<rect x="792.25" y="177.00" width="3" height="18.00" fill="#fcfff4" stroke="#6cc010" stroke-width="0.9"/>
<line x1="799.31" y1="191.25" x2="799.31" y2="215.00" stroke="#64b40c" stroke-width="1.1"/>
<rect x="797.81" y="193.75" width="3" height="16.75" fill="#fcfff4" stroke="#6cc010" stroke-width="0.9"/>
<line x1="804.88" y1="201.25" x2="804.88" y2="213.00" stroke="#64b40c" stroke-width="1.1"/>
<rect x="803.38" y="207.50" width="3" height="3.75" fill="#000" stroke="#6cc010" stroke-width="1"/>
<line x1="810.44" y1="200.00" x2="810.44" y2="217.50" stroke="#64b40c" stroke-width="1.1"/>
<rect x="808.94" y="205.50" width="3" height="2.00" fill="#000" stroke="#6cc010" stroke-width="1"/>
<line x1="816.00" y1="201.25" x2="816.00" y2="214.50" stroke="#64b40c" stroke-width="1.1"/>
<rect x="814.50" y="205.00" width="3" height="5.50" fill="#fcfff4" stroke="#6cc010" stroke-width="0.9"/>
<line x1="821.56" y1="208.75" x2="821.56" y2="220.50" stroke="#64b40c" stroke-width="1.1"/>
<rect x="820.06" y="210.00" width="3" height="9.50" fill="#fcfff4" stroke="#6cc010" stroke-width="0.9"/>
<line x1="827.12" y1="213.75" x2="827.12" y2="222.50" stroke="#64b40c" stroke-width="1.1"/>
<rect x="825.62" y="217.00" width="3" height="2.50" fill="#000" stroke="#6cc010" stroke-width="1"/>
<line x1="832.69" y1="214.50" x2="832.69" y2="258.75" stroke="#64b40c" stroke-width="1.1"/>
<rect x="831.19" y="217.50" width="3" height="40.00" fill="#fcfff4" stroke="#6cc010" stroke-width="0.9"/>
<line x1="838.25" y1="247.00" x2="838.25" y2="293.75" stroke="#64b40c" stroke-width="1.1"/>
<rect x="836.75" y="257.50" width="3" height="10.00" fill="#fcfff4" stroke="#6cc010" stroke-width="0.9"/>
<line x1="843.81" y1="253.75" x2="843.81" y2="274.50" stroke="#64b40c" stroke-width="1.1"/>
<rect x="842.31" y="258.00" width="3" height="9.50" fill="#000" stroke="#6cc010" stroke-width="1"/>
<line x1="849.38" y1="226.25" x2="849.38" y2="263.00" stroke="#64b40c" stroke-width="1.1"/>
<rect x="847.88" y="245.00" width="3" height="13.00" fill="#000" stroke="#6cc010" stroke-width="1"/>
<line x1="854.94" y1="234.50" x2="854.94" y2="247.50" stroke="#64b40c" stroke-width="1.1"/>
<line x1="852.94" y1="245.50" x2="856.94" y2="245.50" stroke="#6cc010" stroke-width="1.05"/>
<line x1="860.50" y1="233.00" x2="860.50" y2="254.50" stroke="#64b40c" stroke-width="1.1"/>
<line x1="858.50" y1="244.50" x2="862.50" y2="244.50" stroke="#6cc010" stroke-width="1.05"/>
<line x1="866.06" y1="238.75" x2="866.06" y2="254.50" stroke="#64b40c" stroke-width="1.1"/>
<rect x="864.56" y="244.50" width="3" height="7.50" fill="#fcfff4" stroke="#6cc010" stroke-width="0.9"/>
<line x1="871.62" y1="248.00" x2="871.62" y2="269.50" stroke="#64b40c" stroke-width="1.1"/>
<rect x="870.12" y="250.00" width="3" height="17.00" fill="#fcfff4" stroke="#6cc010" stroke-width="0.9"/>
<line x1="877.19" y1="259.50" x2="877.19" y2="280.50" stroke="#64b40c" stroke-width="1.1"/>
<rect x="875.69" y="266.25" width="3" height="8.25" fill="#fcfff4" stroke="#6cc010" stroke-width="0.9"/>
<line x1="882.75" y1="258.00" x2="882.75" y2="279.50" stroke="#64b40c" stroke-width="1.1"/>
<line x1="880.75" y1="274.62" x2="884.75" y2="274.62" stroke="#6cc010" stroke-width="1.05"/>
<line x1="888.31" y1="263.00" x2="888.31" y2="308.00" stroke="#64b40c" stroke-width="1.1"/>
<rect x="886.81" y="269.50" width="3" height="5.50" fill="#000" stroke="#6cc010" stroke-width="1"/>
<line x1="893.88" y1="254.50" x2="893.88" y2="274.50" stroke="#64b40c" stroke-width="1.1"/>
<rect x="892.38" y="255.50" width="3" height="14.00" fill="#000" stroke="#6cc010" stroke-width="1"/>
<line x1="899.44" y1="255.50" x2="899.44" y2="268.00" stroke="#64b40c" stroke-width="1.1"/>
<rect x="897.94" y="256.25" width="3" height="6.25" fill="#fcfff4" stroke="#6cc010" stroke-width="0.9"/>
<line x1="905.00" y1="254.50" x2="905.00" y2="272.00" stroke="#64b40c" stroke-width="1.1"/>
<rect x="903.50" y="262.00" width="3" height="8.50" fill="#fcfff4" stroke="#6cc010" stroke-width="0.9"/>
<line x1="910.56" y1="248.75" x2="910.56" y2="274.50" stroke="#64b40c" stroke-width="1.1"/>
<rect x="909.06" y="250.00" width="3" height="20.50" fill="#000" stroke="#6cc010" stroke-width="1"/>
<line x1="916.12" y1="249.50" x2="916.12" y2="262.00" stroke="#64b40c" stroke-width="1.1"/>
<rect x="914.62" y="250.50" width="3" height="10.00" fill="#fcfff4" stroke="#6cc010" stroke-width="0.9"/>
<line x1="921.69" y1="254.50" x2="921.69" y2="262.00" stroke="#64b40c" stroke-width="1.1"/>
<rect x="920.19" y="255.50" width="3" height="5.00" fill="#000" stroke="#6cc010" stroke-width="1"/>
<line x1="927.25" y1="255.00" x2="927.25" y2="269.50" stroke="#64b40c" stroke-width="1.1"/>
<rect x="925.75" y="256.25" width="3" height="12.50" fill="#fcfff4" stroke="#6cc010" stroke-width="0.9"/>
<line x1="932.81" y1="268.00" x2="932.81" y2="277.50" stroke="#64b40c" stroke-width="1.1"/>
<line x1="930.81" y1="269.62" x2="934.81" y2="269.62" stroke="#6cc010" stroke-width="1.05"/>
<line x1="938.38" y1="257.00" x2="938.38" y2="271.25" stroke="#64b40c" stroke-width="1.1"/>
<rect x="936.88" y="257.50" width="3" height="13.00" fill="#000" stroke="#6cc010" stroke-width="1"/>
<line x1="943.94" y1="238.75" x2="943.94" y2="258.00" stroke="#64b40c" stroke-width="1.1"/>
<rect x="942.44" y="242.00" width="3" height="15.50" fill="#000" stroke="#6cc010" stroke-width="1"/>
<line x1="949.50" y1="237.00" x2="949.50" y2="251.25" stroke="#64b40c" stroke-width="1.1"/>
<rect x="948.00" y="242.00" width="3" height="4.25" fill="#fcfff4" stroke="#6cc010" stroke-width="0.9"/>
<line x1="955.06" y1="243.00" x2="955.06" y2="266.25" stroke="#64b40c" stroke-width="1.1"/>
<rect x="953.56" y="246.25" width="3" height="18.25" fill="#fcfff4" stroke="#6cc010" stroke-width="0.9"/>
<line x1="960.62" y1="262.00" x2="960.62" y2="279.50" stroke="#64b40c" stroke-width="1.1"/>
<rect x="959.12" y="264.50" width="3" height="14.25" fill="#fcfff4" stroke="#6cc010" stroke-width="0.9"/>
<line x1="966.19" y1="253.75" x2="966.19" y2="279.50" stroke="#64b40c" stroke-width="1.1"/>
<rect x="964.69" y="272.00" width="3" height="7.00" fill="#000" stroke="#6cc010" stroke-width="1"/>
<line x1="971.75" y1="270.50" x2="971.75" y2="279.50" stroke="#64b40c" stroke-width="1.1"/>
<line x1="969.75" y1="271.25" x2="973.75" y2="271.25" stroke="#6cc010" stroke-width="1.05"/>
<line x1="977.31" y1="268.75" x2="977.31" y2="275.00" stroke="#64b40c" stroke-width="1.1"/>
<line x1="975.31" y1="270.38" x2="979.31" y2="270.38" stroke="#6cc010" stroke-width="1.05"/>
</g>
<g clip-path="url(#cm)" fill="none" stroke="#66e4ee" stroke-width="1.45" stroke-linejoin="round">
<path d="M15.00 177.50 L35.00 176.25 L52.50 173.75 L62.50 168.75 L75.00 165.00 L97.50 163.75 L117.50 165.00 L132.50 167.50 L145.00 169.25 L170.00 168.25 L185.00 166.25 L197.50 165.00 L210.00 165.75 L235.00 169.50 L250.00 172.00 L260.00 174.50 L270.00 178.00 L280.00 176.25 L297.50 176.25 L305.00 168.75 L320.00 157.50 L330.00 140.00 L337.50 126.25 L345.00 110.00 L355.00 97.50 L367.50 86.25 L380.00 78.75 L387.50 75.40 L395.00 75.70 L415.00 75.80 L419.00 77.60 L423.00 80.40 L426.50 83.50 L429.50 87.50 L432.50 92.00 L445.00 90.00 L460.00 92.00 L472.50 94.50 L490.00 92.50 L505.00 89.50 L515.00 88.75 L542.50 88.75 L560.00 97.50 L580.00 99.50 L595.00 97.00 L615.00 98.75 L637.50 99.50 L655.00 105.00 L670.00 107.50 L685.00 107.00 L700.00 108.75 L715.00 110.00 L725.00 107.00 L732.50 98.75 L745.00 96.25 L755.00 88.75 L762.00 86.00 L767.50 84.20 L773.50 82.30 L777.20 81.40 L780.50 82.70 L783.70 83.90 L788.10 83.90 L791.00 85.60 L794.40 88.70 L799.00 88.80 L801.30 92.00 L804.40 96.40 L810.60 102.00 L816.90 107.60 L821.25 112.50 L827.50 123.75 L833.75 120.00 L838.75 115.50 L844.50 115.00 L852.50 122.50 L861.25 132.50 L872.50 137.00 L882.50 138.00 L890.00 143.75 L896.25 155.00 L900.00 165.00 L910.00 177.50 L917.50 188.75 L925.00 202.50 L932.50 217.50 L938.75 231.25 L945.00 228.75 L951.25 226.25 L960.00 227.00 L967.50 230.00 L973.75 233.75 L978.00 234.50"/>
<path d="M15.00 184.50 L40.00 183.75 L60.00 182.00 L85.00 180.00 L110.00 178.25 L135.00 177.50 L160.00 177.50 L180.00 179.50 L200.00 182.00 L222.50 184.50 L247.50 187.50 L265.00 188.75 L275.00 189.25 L292.50 188.75 L310.00 185.50 L327.50 180.00 L345.00 172.50 L360.00 163.75 L377.50 152.50 L395.00 141.25 L410.00 132.50 L425.00 125.50 L440.00 120.00 L455.00 117.00 L472.50 115.00 L490.00 115.50 L505.00 117.00 L515.00 117.50 L542.50 117.50 L560.00 121.25 L575.00 123.75 L595.00 123.00 L615.00 122.50 L635.00 123.00 L655.00 125.50 L675.00 127.50 L695.00 127.50 L710.00 128.75 L725.00 130.00 L740.00 135.50 L752.50 141.25 L760.00 145.00 L772.50 152.00 L782.50 157.50 L790.00 160.00 L800.00 166.25 L812.50 175.00 L825.00 185.00 L837.50 197.50 L850.00 206.25 L860.00 213.75 L875.00 223.75 L890.00 234.50 L905.00 245.00 L920.00 252.00 L932.50 257.50 L940.00 260.00 L951.25 258.00 L960.00 260.00 L970.00 262.50 L978.00 264.50"/>
<path d="M15.00 191.75 L35.00 192.50 L55.00 195.00 L75.00 197.00 L90.00 196.25 L105.00 193.75 L120.00 190.50 L135.00 187.00 L150.00 185.00 L162.50 186.25 L175.00 189.50 L190.00 194.50 L200.00 198.00 L222.50 200.50 L242.50 203.25 L257.50 202.00 L270.00 199.50 L275.00 200.75 L297.50 200.75 L305.00 205.50 L321.25 209.50 L330.00 221.25 L337.50 227.50 L343.75 236.25 L350.00 237.00 L360.00 234.50 L370.00 232.50 L380.00 227.50 L392.50 221.25 L400.00 212.50 L410.00 193.75 L420.00 178.75 L427.50 163.75 L432.50 155.00 L445.00 147.00 L460.00 143.75 L470.00 137.00 L477.50 134.50 L492.50 137.50 L505.00 145.00 L515.00 146.25 L532.50 146.25 L547.50 145.00 L560.00 142.50 L567.50 147.00 L582.50 149.50 L605.00 148.00 L615.00 144.50 L635.00 145.00 L655.00 144.50 L675.00 147.50 L690.00 145.00 L710.00 146.25 L717.50 148.00 L725.00 155.00 L732.50 166.25 L742.50 175.00 L752.50 190.00 L760.00 202.50 L767.50 216.25 L777.50 230.00 L790.00 236.25 L800.00 244.50 L810.00 247.00 L820.00 251.25 L827.50 250.00 L832.50 260.00 L838.75 280.00 L843.75 290.50 L855.00 297.00 L862.50 298.00 L870.00 306.25 L877.50 315.00 L885.00 322.00 L900.00 324.00 L910.00 316.00 L917.50 312.00 L925.00 305.00 L932.50 298.00 L938.75 288.75 L945.00 290.00 L952.50 290.50 L960.00 293.00 L978.00 293.00"/>
</g>
<path d="M783.7 75.2 L790.4 75.2 L787.05 78.5 Z" fill="#8497b0"/>
<path d="M15.1 436.2 L18.2 439.9 L15.1 439.9 Z" fill="#8fa6c4"/>
<g stroke="#c0b222" stroke-width="1.05" stroke-dasharray="2.6 1.56">
<line x1="15.1" y1="354" x2="981.4" y2="354"/>
<line x1="15.1" y1="403.4" x2="981.4" y2="403.4"/>
</g>
<path clip-path="url(#cr)" d="M15.00 378.25 L20.56 374.50 L26.12 364.50 L31.69 379.50 L37.25 367.50 L42.81 367.00 L48.38 365.00 L53.94 365.00 L59.50 355.75 L65.06 366.50 L70.62 362.50 L76.19 364.00 L81.75 370.75 L87.31 367.75 L92.88 367.50 L98.44 367.75 L104.00 379.50 L109.56 375.75 L115.12 376.50 L120.69 380.00 L126.25 380.00 L131.81 376.50 L137.38 381.50 L142.94 382.00 L148.50 389.50 L154.06 375.75 L159.62 380.75 L165.19 388.25 L170.75 394.00 L176.31 399.00 L181.88 395.75 L187.44 402.00 L193.00 406.50 L198.56 406.50 L204.12 392.75 L209.69 398.25 L215.25 387.00 L220.81 377.50 L226.38 384.50 L231.94 390.00 L237.50 392.00 L243.06 400.00 L248.62 384.50 L254.19 378.25 L259.75 372.50 L265.31 379.50 L270.88 373.25 L276.44 364.50 L282.00 373.25 L287.56 380.00 L293.12 375.75 L298.69 375.75 L304.25 355.00 L309.81 361.50 L315.38 359.50 L320.94 357.00 L326.50 344.00 L332.06 340.75 L337.62 344.50 L343.19 336.25 L348.75 350.75 L354.31 355.00 L359.88 354.00 L365.44 353.25 L371.00 349.50 L376.56 349.50 L382.12 349.50 L387.69 349.00 L393.25 342.50 L398.81 345.75 L404.38 355.00 L409.94 360.00 L415.50 357.00 L421.06 352.50 L426.62 365.75 L432.19 367.50 L437.75 354.00 L443.31 356.50 L448.88 359.50 L454.44 368.25 L460.00 367.00 L465.56 370.00 L471.12 376.50 L476.69 382.00 L482.25 388.25 L487.81 386.50 L493.38 387.00 L498.94 389.50 L504.50 397.50 L510.06 383.00 L515.62 370.75 L521.19 376.50 L526.75 374.00 L532.31 367.50 L537.88 370.00 L543.44 367.00 L549.00 376.50 L554.56 379.50 L560.12 384.50 L565.69 397.00 L571.25 397.00 L576.81 387.00 L582.38 379.50 L587.94 370.75 L593.50 375.00 L599.06 378.25 L604.62 376.50 L610.19 375.75 L615.75 380.75 L621.31 386.50 L626.88 372.50 L632.44 375.75 L638.00 385.75 L643.56 385.75 L649.12 380.75 L654.69 382.75 L660.25 382.75 L665.81 392.00 L671.38 385.00 L676.94 397.00 L682.50 377.00 L688.06 381.50 L693.62 372.00 L699.19 380.00 L704.75 387.00 L710.31 381.50 L715.88 380.00 L721.44 392.00 L727.00 397.50 L732.56 402.50 L738.12 397.50 L743.69 399.50 L749.25 399.50 L754.81 409.50 L760.38 402.50 L765.94 405.50 L771.50 409.00 L777.06 408.25 L782.62 395.75 L788.19 388.25 L793.75 399.00 L799.31 404.50 L804.88 402.00 L810.44 399.50 L816.00 402.50 L821.56 405.75 L827.12 404.00 L832.69 416.50 L838.25 418.25 L843.81 410.75 L849.38 399.50 L854.94 399.50 L860.50 399.00 L866.06 402.00 L871.62 407.50 L877.19 410.00 L882.75 410.00 L888.31 404.00 L893.88 392.00 L899.44 394.50 L905.00 399.00 L910.56 383.25 L916.12 388.25 L921.69 385.00 L927.25 392.50 L932.81 392.50 L938.38 382.00 L943.94 373.25 L949.50 375.75 L955.06 387.00 L960.62 393.25 L966.19 388.25 L971.75 388.25 L977.31 387.00" fill="none" stroke="#3396fa" stroke-width="1.8" stroke-linejoin="round"/>
<rect x="19.2" y="89.4" width="169" height="1.6" fill="#e63a28"/>
<rect x="9.6" y="331.5" width="63.5" height="1.6" fill="#e63a28"/>
<path d="M8.6 332.2 L10.6 330.9 L10.6 333.5 Z" fill="#e2351f"/>
<g fill="#ececec" font-size="7.3px">
<rect x="982.6" y="81.9" width="1.3" height="0.9" fill="#b9b9b9"/>
<text x="985.8" y="84.7" textLength="23.2" lengthAdjust="spacingAndGlyphs">1.26415</text>
<rect x="982.6" y="105.3" width="1.3" height="0.9" fill="#b9b9b9"/>
<text x="985.8" y="108.1" textLength="23.2" lengthAdjust="spacingAndGlyphs">1.26260</text>
<rect x="982.6" y="128.8" width="1.3" height="0.9" fill="#b9b9b9"/>
<text x="985.8" y="131.6" textLength="23.2" lengthAdjust="spacingAndGlyphs">1.26105</text>
<rect x="982.6" y="151.9" width="1.3" height="0.9" fill="#b9b9b9"/>
<text x="985.8" y="154.7" textLength="23.2" lengthAdjust="spacingAndGlyphs">1.25950</text>
<rect x="982.6" y="174.9" width="1.3" height="0.9" fill="#b9b9b9"/>
<text x="985.8" y="177.7" textLength="23.2" lengthAdjust="spacingAndGlyphs">1.25795</text>
<rect x="982.6" y="198.1" width="1.3" height="0.9" fill="#b9b9b9"/>
<text x="985.8" y="200.9" textLength="23.2" lengthAdjust="spacingAndGlyphs">1.25640</text>
<rect x="982.6" y="221.2" width="1.3" height="0.9" fill="#b9b9b9"/>
<text x="985.8" y="224.0" textLength="23.2" lengthAdjust="spacingAndGlyphs">1.25485</text>
<rect x="982.6" y="244.3" width="1.3" height="0.9" fill="#b9b9b9"/>
<text x="985.8" y="247.1" textLength="23.2" lengthAdjust="spacingAndGlyphs">1.25330</text>
<rect x="982.6" y="267.1" width="1.3" height="0.9" fill="#b9b9b9"/>
<text x="985.8" y="269.9" textLength="23.2" lengthAdjust="spacingAndGlyphs">1.25180</text>
<rect x="982.6" y="290.1" width="1.3" height="0.9" fill="#b9b9b9"/>
<text x="985.8" y="292.9" textLength="23.2" lengthAdjust="spacingAndGlyphs">1.25025</text>
<rect x="982.6" y="313.1" width="1.3" height="0.9" fill="#b9b9b9"/>
<text x="985.8" y="315.9" textLength="23.2" lengthAdjust="spacingAndGlyphs">1.24870</text>
<text x="983.6" y="324.4" textLength="9.6" lengthAdjust="spacingAndGlyphs">100</text>
<text x="983.6" y="357.0" textLength="6.8" lengthAdjust="spacingAndGlyphs">70</text>
<text x="983.6" y="406.5" textLength="6.8" lengthAdjust="spacingAndGlyphs">30</text>
<text x="983.6" y="438.4" textLength="3.6" lengthAdjust="spacingAndGlyphs">0</text>
<rect x="14.30" y="441" width="1" height="2.2" fill="#b9b9b9"/>
<text x="14.20" y="449.2" font-size="7.5px" textLength="35.8" lengthAdjust="spacingAndGlyphs">11 Dec 2018</text>
<rect x="58.80" y="441" width="1" height="2.2" fill="#b9b9b9"/>
<text x="58.70" y="449.2" font-size="7.5px" textLength="38.0" lengthAdjust="spacingAndGlyphs">11 Dec 05:20</text>
<rect x="103.30" y="441" width="1" height="2.2" fill="#b9b9b9"/>
<text x="103.20" y="449.2" font-size="7.5px" textLength="38.0" lengthAdjust="spacingAndGlyphs">11 Dec 06:00</text>
<rect x="147.80" y="441" width="1" height="2.2" fill="#b9b9b9"/>
<text x="147.70" y="449.2" font-size="7.5px" textLength="38.0" lengthAdjust="spacingAndGlyphs">11 Dec 06:40</text>
<rect x="192.30" y="441" width="1" height="2.2" fill="#b9b9b9"/>
<text x="192.20" y="449.2" font-size="7.5px" textLength="38.0" lengthAdjust="spacingAndGlyphs">11 Dec 07:20</text>
<rect x="236.80" y="441" width="1" height="2.2" fill="#b9b9b9"/>
<text x="236.70" y="449.2" font-size="7.5px" textLength="38.0" lengthAdjust="spacingAndGlyphs">11 Dec 08:00</text>
<rect x="281.30" y="441" width="1" height="2.2" fill="#b9b9b9"/>
<text x="281.20" y="449.2" font-size="7.5px" textLength="38.0" lengthAdjust="spacingAndGlyphs">11 Dec 08:40</text>
<rect x="325.80" y="441" width="1" height="2.2" fill="#b9b9b9"/>
<text x="325.70" y="449.2" font-size="7.5px" textLength="38.0" lengthAdjust="spacingAndGlyphs">11 Dec 09:20</text>
<rect x="370.30" y="441" width="1" height="2.2" fill="#b9b9b9"/>
<text x="370.20" y="449.2" font-size="7.5px" textLength="38.0" lengthAdjust="spacingAndGlyphs">11 Dec 10:00</text>
<rect x="414.80" y="441" width="1" height="2.2" fill="#b9b9b9"/>
<text x="414.70" y="449.2" font-size="7.5px" textLength="38.0" lengthAdjust="spacingAndGlyphs">11 Dec 10:40</text>
<rect x="459.30" y="441" width="1" height="2.2" fill="#b9b9b9"/>
<text x="459.20" y="449.2" font-size="7.5px" textLength="38.0" lengthAdjust="spacingAndGlyphs">11 Dec 11:20</text>
<rect x="503.80" y="441" width="1" height="2.2" fill="#b9b9b9"/>
<text x="503.70" y="449.2" font-size="7.5px" textLength="38.0" lengthAdjust="spacingAndGlyphs">11 Dec 12:00</text>
<rect x="548.30" y="441" width="1" height="2.2" fill="#b9b9b9"/>
<text x="548.20" y="449.2" font-size="7.5px" textLength="38.0" lengthAdjust="spacingAndGlyphs">11 Dec 12:40</text>
<rect x="592.80" y="441" width="1" height="2.2" fill="#b9b9b9"/>
<text x="592.70" y="449.2" font-size="7.5px" textLength="38.0" lengthAdjust="spacingAndGlyphs">11 Dec 13:20</text>
<rect x="637.30" y="441" width="1" height="2.2" fill="#b9b9b9"/>
<text x="637.20" y="449.2" font-size="7.5px" textLength="38.0" lengthAdjust="spacingAndGlyphs">11 Dec 14:00</text>
<rect x="681.80" y="441" width="1" height="2.2" fill="#b9b9b9"/>
<text x="681.70" y="449.2" font-size="7.5px" textLength="38.0" lengthAdjust="spacingAndGlyphs">11 Dec 14:40</text>
<rect x="726.30" y="441" width="1" height="2.2" fill="#b9b9b9"/>
<text x="726.20" y="449.2" font-size="7.5px" textLength="38.0" lengthAdjust="spacingAndGlyphs">11 Dec 15:20</text>
<rect x="770.80" y="441" width="1" height="2.2" fill="#b9b9b9"/>
<text x="770.70" y="449.2" font-size="7.5px" textLength="38.0" lengthAdjust="spacingAndGlyphs">11 Dec 16:00</text>
<rect x="815.30" y="441" width="1" height="2.2" fill="#b9b9b9"/>
<text x="815.20" y="449.2" font-size="7.5px" textLength="38.0" lengthAdjust="spacingAndGlyphs">11 Dec 16:40</text>
<rect x="859.80" y="441" width="1" height="2.2" fill="#b9b9b9"/>
<text x="859.70" y="449.2" font-size="7.5px" textLength="38.0" lengthAdjust="spacingAndGlyphs">11 Dec 17:20</text>
<rect x="904.30" y="441" width="1" height="2.2" fill="#b9b9b9"/>
<text x="904.20" y="449.2" font-size="7.5px" textLength="38.0" lengthAdjust="spacingAndGlyphs">11 Dec 18:00</text>
<rect x="948.80" y="441" width="1" height="2.2" fill="#b9b9b9"/>
<text x="948.70" y="449.2" font-size="7.5px" textLength="38.0" lengthAdjust="spacingAndGlyphs">11 Dec 18:40</text>
</g>
<path d="M16.5 79.3 L21.8 79.3 L19.15 82.2 Z" fill="#fff"/>
<text x="25" y="82.9" font-size="7.2px" fill="#fff" textLength="141.3" lengthAdjust="spacingAndGlyphs" xml:space="preserve">GBPUSD,M5  1.32915 1.32935 1.32815 1.32815</text>
<text x="17" y="325.8" font-size="7.3px" fill="#fff" textLength="47.2" lengthAdjust="spacingAndGlyphs">RSI(11) 41.9158</text>
<g id="toolbar">
<rect x="12.4" y="37.5" width="2.2" height="13.3" fill="#c9c9c9"/>
<line x1="13.5" y1="37.5" x2="13.5" y2="50.8" stroke="#b0b0b0" stroke-width="2" stroke-dasharray="1 1.25"/>
<rect x="18.9" y="39.2" width="8.8" height="7.2" rx="0.8" fill="#eef4fc" stroke="#5f97da" stroke-width="1"/>
<rect x="18.9" y="39.2" width="8.8" height="1.5" fill="#74a6e0"/>
<path d="M20.6 41.5 V45 H24" stroke="#8a98a8" stroke-width="0.6" fill="none"/>
<path d="M25.30 41.10 h2.40 v3.00 h3.00 v2.40 h-3.00 v3.00 h-2.40 v-3.00 h-3.00 v-2.40 h3.00 Z" fill="#58c838" stroke="#2e9a1a" stroke-width="0.6" stroke-linejoin="round"/>
<path d="M26.00 41.90 v6.80 M23.10 44.80 h6.80" stroke="#a4ec80" stroke-width="0.7" fill="none"/>
<path d="M33.40 44.00 L36.90 44.00 L35.15 46.10 Z" fill="#151515"/>
<rect x="44.2" y="39.2" width="9.4" height="7.2" rx="0.8" fill="#e8f0fb" stroke="#5f97da" stroke-width="1"/>
<rect x="44.2" y="39.2" width="9.4" height="1.4" fill="#74a6e0"/>
<rect x="46.5" y="42.6" width="9.4" height="7.2" rx="0.8" fill="#edf3fc" stroke="#4d88d2" stroke-width="1"/>
<rect x="46.5" y="42.6" width="9.4" height="1.4" fill="#6a9edc"/>
<path d="M48.2 44.6 V48.2 H53.8" stroke="#8a98a8" stroke-width="0.6" fill="none"/>
<path d="M58.70 44.00 L62.20 44.00 L60.45 46.10 Z" fill="#151515"/>
<rect x="67.00" y="37.0" width="1" height="14.0" fill="#8f8f8f"/>
<rect x="68.00" y="37.0" width="0.8" height="14.0" fill="#e9e9e9"/>
<rect x="74.1" y="39.2" width="10.6" height="10.3" rx="1.3" fill="#fbfdf6" stroke="#82b2ea" stroke-width="1.2"/>
<path d="M77.4 40.4 L80 43 L77.4 45.6 L74.9 43 Z" fill="#3db22a"/>
<path d="M80.7 43.6 L83.3 46.3 L80.7 48.9 L78.1 46.3 Z" fill="#dba878"/>
<path d="M82 45.2 L83.7 46.3 L82 47.4 Z" fill="#d23a24"/>
<path d="M77.4 41.6 v2.2" stroke="#c8f0b0" stroke-width="0.7"/>
<g stroke="#727272" fill="none" stroke-width="0.9"><circle cx="97" cy="44.7" r="3.7" fill="#dadada"/><path d="M97 39.6 V42.6 M97 46.8 V49.9 M91.9 44.7 H94.9 M99.1 44.7 H102.1"/></g>
<path d="M97 38.7 l1.5 1.9 h-3 Z M97 50.8 l1.5 -1.9 h-3 Z M91 44.7 l1.9 -1.5 v3 Z M103 44.7 l-1.9 -1.5 v3 Z" fill="#727272"/>
<path d="M108.2 39.6 H111.6 L112.5 40.7 H116.8 V46 H108.2 Z" fill="#ecc94c" stroke="#c59c2c" stroke-width="0.6"/>
<rect x="109" y="41.5" width="6.2" height="1.5" fill="#e6f6c6"/>
<rect x="110.4" y="46.2" width="1" height="3.4" fill="#a9a9a9"/>
<path d="M116.70 42.50 L117.88 45.08 L120.69 45.40 L118.60 47.32 L119.17 50.10 L116.70 48.70 L114.23 50.10 L114.80 47.32 L112.71 45.40 L115.52 45.08 Z" fill="#e9c040" stroke="#b98c22" stroke-width="0.6" stroke-linejoin="round"/>
<rect x="123.2" y="36.3" width="15.5" height="15.2" fill="#eeeeee"/>
<rect x="123.2" y="36.3" width="15.5" height="0.9" fill="#8c8c8c"/>
<rect x="123.2" y="36.3" width="0.9" height="15.2" fill="#8c8c8c"/>
<rect x="123.2" y="50.7" width="15.5" height="0.8" fill="#fafafa"/>
<rect x="137.9" y="36.3" width="0.8" height="15.2" fill="#fafafa"/>
<rect x="126" y="39.4" width="11.4" height="9.9" rx="1.3" fill="#4f8fda"/>
<rect x="128.6" y="40.6" width="7.9" height="4" fill="#dce9f9"/>
<rect x="128.6" y="44.6" width="7.9" height="3.8" fill="#ffffff"/>
<rect x="129.2" y="41.3" width="1.1" height="1" fill="#e8703e"/><rect x="129.2" y="44.4" width="1.1" height="1" fill="#e8703e"/>
<rect x="126.6" y="41" width="1.3" height="6.5" fill="#2f6cc0"/>
<rect x="143.6" y="39.8" width="8.8" height="8.2" fill="#f0f0f0" stroke="#b4b4b4" stroke-width="0.6"/>
<path d="M145 41.5 h5 M145 43 h2" stroke="#8a9ab0" stroke-width="0.6"/>
<line x1="151.6" y1="47.5" x2="154.8" y2="50" stroke="#dca534" stroke-width="2.2" stroke-linecap="round"/>
<circle cx="149" cy="45" r="3.3" fill="#e8f1fc" stroke="#8cb8ea" stroke-width="1.3"/>
<path d="M149 43.3 V45 H150.3" stroke="#7a8aa0" stroke-width="0.6" fill="none"/>
<rect x="158.30" y="37.0" width="1" height="14.0" fill="#a6a6a6"/>
<rect x="159.30" y="37.0" width="0.8" height="14.0" fill="#e9e9e9"/>
<path d="M165.6 39.5 H171.4 L174 42.1 V48.6 H165.6 Z" fill="#f4f4f4" stroke="#9a9a9a" stroke-width="0.7"/>
<path d="M171.4 39.5 V42.1 H174" fill="none" stroke="#9a9a9a" stroke-width="0.6"/>
<path d="M167 43.5 h4 M167 45.2 h3" stroke="#b0b0b0" stroke-width="0.6"/>
<path d="M171.30 42.90 h2.40 v3.00 h3.00 v2.40 h-3.00 v3.00 h-2.40 v-3.00 h-3.00 v-2.40 h3.00 Z" fill="#58c838" stroke="#2e9a1a" stroke-width="0.6" stroke-linejoin="round"/>
<path d="M172.00 43.70 v6.80 M169.10 46.60 h6.80" stroke="#a4ec80" stroke-width="0.7" fill="none"/>
<text x="178.2" y="46.8" font-size="8px" fill="#161616" textLength="45.8" lengthAdjust="spacingAndGlyphs">Новый ордер</text>
<path d="M237.5 39.3 L244.1 44.6 L238.6 49.6 L232.9 45.9 Z" fill="#e9c634" stroke="#b3843a" stroke-width="0.7" stroke-linejoin="round"/>
<path d="M233.1 46.4 L238.6 50 L244.1 45" fill="none" stroke="#a87832" stroke-width="1.5"/>
<path d="M236.6 41.6 L241.2 45.2 M235.4 43.2 L239.8 46.6" stroke="#f6e27a" stroke-width="0.8"/>
<rect x="252" y="39" width="8.2" height="7.2" fill="#4a97ee"/>
<rect x="254.8" y="40.2" width="4.4" height="3.6" fill="#a9d1f9"/>
<path d="M252.6 50 a2.3 2.3 0 0 1 0.2 -4.5 a3.4 3.4 0 0 1 5.4 -0.4 a2.5 2.5 0 0 1 3 2.3 a1.4 1.4 0 0 1 -0.5 2.6 Z" fill="#f0f4fb" stroke="#7fa0cb" stroke-width="0.7"/>
<circle cx="273.5" cy="44.6" r="5.3" fill="#dfe5ee" stroke="#a9c0e0" stroke-width="0.9"/>
<circle cx="273.5" cy="44.6" r="3.5" fill="none" stroke="#8aaada" stroke-width="0.9"/>
<circle cx="273.3" cy="44.4" r="1.5" fill="#2a6ad2"/>
<rect x="273.2" y="46.3" width="1.7" height="3.4" fill="#5ab432"/><rect x="275.4" y="45" width="1.7" height="4.7" fill="#5ab432"/>
<path d="M285.2 43.8 H295 L291.6 49.7 L287.6 48.4 Z" fill="#f0c93c" stroke="#d0a52c" stroke-width="0.5"/>
<rect x="285.3" y="43" width="9.6" height="1.1" fill="#5ab83a"/>
<ellipse cx="290" cy="41.7" rx="5.7" ry="2.1" fill="#5aa8ea"/>
<ellipse cx="290" cy="40.5" rx="3.1" ry="1.7" fill="#6cb6f2"/>
<circle cx="293.3" cy="47.1" r="2.9" fill="#d9321e"/>
<rect x="292.3" y="46.1" width="2" height="2" fill="#ffffff"/>
<text x="299" y="46.8" font-size="8px" fill="#161616" textLength="51" lengthAdjust="spacingAndGlyphs">Авто-торговля</text>
<rect x="354.90" y="35.6" width="1" height="16.8" fill="#7e7e7e"/>
<rect x="355.90" y="35.6" width="0.8" height="16.8" fill="#e9e9e9"/>
<rect x="358.1" y="37.5" width="2.2" height="13.3" fill="#c9c9c9"/>
<line x1="359.2" y1="37.5" x2="359.2" y2="50.8" stroke="#b0b0b0" stroke-width="2" stroke-dasharray="1 1.25"/>
<path d="M368.40 40.6 V49.9 M366.50 48.5 H375.60" stroke="#555" stroke-width="1" fill="none"/>
<path d="M368.40 39.2 l1.5 2 h-3 Z M376.60 48.5 l-2 -1.5 v3 Z" fill="#555"/>
<path d="M372.7 41.5 V46.7 M371 46.2 H372.7 M372.7 42 H374.4" stroke="#3db22a" stroke-width="1.3" fill="none"/>
<rect x="380.2" y="36.3" width="15.0" height="15.2" fill="#eeeeee"/>
<rect x="380.2" y="36.3" width="15.0" height="0.9" fill="#8c8c8c"/>
<rect x="380.2" y="36.3" width="0.9" height="15.2" fill="#8c8c8c"/>
<rect x="380.2" y="50.7" width="15.0" height="0.8" fill="#fafafa"/>
<rect x="394.4" y="36.3" width="0.8" height="15.2" fill="#fafafa"/>
<path d="M385.80 40.6 V49.9 M384.00 48.5 H393.10" stroke="#555" stroke-width="1" fill="none"/>
<path d="M385.80 39.2 l1.5 2 h-3 Z M394.10 48.5 l-2 -1.5 v3 Z" fill="#555"/>
<line x1="390" y1="38.6" x2="390" y2="47.3" stroke="#2e9a1a" stroke-width="0.9"/>
<rect x="388.3" y="39.8" width="3.4" height="6.4" rx="1" fill="#62d03a" stroke="#2e9a1a" stroke-width="0.7"/>
<path d="M403.30 40.6 V49.9 M401.50 48.5 H410.60" stroke="#555" stroke-width="1" fill="none"/>
<path d="M403.30 39.2 l1.5 2 h-3 Z M411.60 48.5 l-2 -1.5 v3 Z" fill="#555"/>
<path d="M402 46.6 L406.4 42.3 L410.2 45.3" stroke="#4cb82c" stroke-width="1.3" fill="none"/>
<rect x="414.90" y="37.0" width="1" height="14.0" fill="#8f8f8f"/>
<rect x="415.90" y="37.0" width="0.8" height="14.0" fill="#e9e9e9"/>
<line x1="428.7" y1="46.4" x2="432.0" y2="48.9" stroke="#e0b234" stroke-width="2.4" stroke-linecap="round"/>
<circle cx="425.6" cy="43.2" r="3.9" fill="#e8f0fb" stroke="#96bdea" stroke-width="1.4"/>
<path d="M423.6 43.2 h4 M425.6 41.2 v4" stroke="#5a8fd2" stroke-width="1.1"/>
<line x1="446.2" y1="46.4" x2="449.5" y2="48.9" stroke="#e0b234" stroke-width="2.4" stroke-linecap="round"/>
<circle cx="443.1" cy="43.2" r="3.9" fill="#e8f0fb" stroke="#96bdea" stroke-width="1.4"/>
<path d="M441.1 43.2 h4" stroke="#5a8fd2" stroke-width="1.1"/>
<rect x="456.3" y="39.1" width="5.5" height="5.1" rx="0.5" fill="#5ab232"/>
<rect x="457.1" y="41.2" width="3.9" height="2.2" fill="#ffffff" fill-opacity="0.72"/>
<rect x="462.1" y="39.1" width="5.5" height="5.1" rx="0.5" fill="#2e7cd6"/>
<rect x="462.9" y="41.2" width="3.9" height="2.2" fill="#ffffff" fill-opacity="0.72"/>
<rect x="456.3" y="44.6" width="5.5" height="5.1" rx="0.5" fill="#2e7cd6"/>
<rect x="457.1" y="46.7" width="3.9" height="2.2" fill="#ffffff" fill-opacity="0.72"/>
<rect x="462.1" y="44.6" width="5.5" height="5.1" rx="0.5" fill="#5ab232"/>
<rect x="462.9" y="46.7" width="3.9" height="2.2" fill="#ffffff" fill-opacity="0.72"/>
<rect x="470.9" y="37.5" width="2.2" height="13.3" fill="#c9c9c9"/>
<line x1="472.0" y1="37.5" x2="472.0" y2="50.8" stroke="#b0b0b0" stroke-width="2" stroke-dasharray="1 1.25"/>
<path d="M481.10 40.6 V49.9 M479.40 48.5 H488.40" stroke="#555" stroke-width="1" fill="none"/>
<path d="M481.10 39.2 l1.5 2 h-3 Z M489.40 48.5 l-2 -1.5 v3 Z" fill="#555"/>
<path d="M484.3 41.3 L487.5 43.9 L484.3 46.5 Z" fill="#5cc034"/>
<rect x="492.4" y="36.3" width="15.4" height="15.2" fill="#eeeeee"/>
<rect x="492.4" y="36.3" width="15.4" height="0.9" fill="#8c8c8c"/>
<rect x="492.4" y="36.3" width="0.9" height="15.2" fill="#8c8c8c"/>
<rect x="492.4" y="50.7" width="15.4" height="0.8" fill="#fafafa"/>
<rect x="507.0" y="36.3" width="0.8" height="15.2" fill="#fafafa"/>
<path d="M498.40 40.6 V49.9 M496.90 48.5 H505.80" stroke="#555" stroke-width="1" fill="none"/>
<path d="M498.40 39.2 l1.5 2 h-3 Z M506.80 48.5 l-2 -1.5 v3 Z" fill="#555"/>
<line x1="502.5" y1="40" x2="502.5" y2="46.9" stroke="#3a80d2" stroke-width="1.1"/>
<path d="M503.5 44 L506.3 42.2 V45.8 Z" fill="#d84222"/>
<rect x="510.20" y="37.0" width="1" height="14.0" fill="#a6a6a6"/>
<rect x="511.20" y="37.0" width="0.8" height="14.0" fill="#e9e9e9"/>
<path d="M517.7 39.5 H523 L525.6 42.1 V48.6 H517.7 Z" fill="#f4f4f4" stroke="#9a9a9a" stroke-width="0.7"/>
<path d="M521.6 41.3 q-1.3 -0.2 -1.3 1.2 V46.5 M519.4 43.4 h2" stroke="#666" stroke-width="0.8" fill="none"/>
<path d="M523.30 42.90 h2.40 v3.00 h3.00 v2.40 h-3.00 v3.00 h-2.40 v-3.00 h-3.00 v-2.40 h3.00 Z" fill="#58c838" stroke="#2e9a1a" stroke-width="0.6" stroke-linejoin="round"/>
<path d="M524.00 43.70 v6.80 M521.10 46.60 h6.80" stroke="#a4ec80" stroke-width="0.7" fill="none"/>
<path d="M531.00 43.80 L534.50 43.80 L532.75 45.90 Z" fill="#151515"/>
<circle cx="547.5" cy="44.3" r="4.7" fill="#ecf1f9" stroke="#1f6fd2" stroke-width="1.8"/>
<path d="M547.5 41.4 V44.3 L549.8 45.2" stroke="#70757c" stroke-width="0.8" fill="none"/>
<path d="M555.80 43.80 L559.30 43.80 L557.55 45.90 Z" fill="#151515"/>
<rect x="567.1" y="39.6" width="10.9" height="9.9" fill="#ffffff" stroke="#5a90da" stroke-width="1"/>
<rect x="567.1" y="39.6" width="10.9" height="1.5" fill="#5a90da"/>
<line x1="567.1" y1="45.1" x2="578" y2="45.1" stroke="#6a9cde" stroke-width="0.8"/>
<path d="M568.6 43.8 L571 42.7 L573 43.1 L576.6 41.9" stroke="#e88a3a" stroke-width="1" fill="none"/>
<path d="M568.6 48 L571 46.9 L573.5 47.7 L576.6 46.5" stroke="#58b030" stroke-width="1" fill="none"/>
<path d="M581.00 43.80 L584.50 43.80 L582.75 45.90 Z" fill="#151515"/>
<rect x="588.00" y="35.5" width="1" height="17.1" fill="#9c9c9c"/>
<rect x="589.00" y="35.5" width="0.8" height="17.1" fill="#e9e9e9"/>
<line x1="979.3" y1="44.6" x2="976" y2="47.9" stroke="#4a88da" stroke-width="2.3" stroke-linecap="round"/>
<circle cx="981.3" cy="42.5" r="2.9" fill="#d9d9d9" stroke="#3c82da" stroke-width="1.2"/>
<path d="M1005.6 44.6 l1 2.2 l-2.6 -1.8 Z" fill="#f4f4f4"/>
<ellipse cx="1004" cy="42.4" rx="4" ry="2.7" fill="#f5f5f5" stroke="#e2e2e2" stroke-width="0.5"/>
<path d="M996.4 47 l-0.6 2.2 l2.6 -1.8 Z" fill="#f4f4f4"/>
<ellipse cx="997.8" cy="45.4" rx="3.3" ry="2.4" fill="#f6f6f6" stroke="#dcdcdc" stroke-width="0.6"/>
<rect x="12.3" y="56.2" width="2.2" height="13.4" fill="#c9c9c9"/>
<line x1="13.4" y1="56.2" x2="13.4" y2="69.6" stroke="#b0b0b0" stroke-width="2" stroke-dasharray="1 1.25"/>
<rect x="16.6" y="55.1" width="15.3" height="15.3" fill="#eeeeee"/>
<rect x="16.6" y="55.1" width="15.3" height="0.9" fill="#8c8c8c"/>
<rect x="16.6" y="55.1" width="0.9" height="15.3" fill="#8c8c8c"/>
<rect x="16.6" y="69.6" width="15.3" height="0.8" fill="#fafafa"/>
<rect x="31.1" y="55.1" width="0.8" height="15.3" fill="#fafafa"/>
<path d="M22.2 58.1 V66.2 L24.1 64.5 L25.7 67.9 L27 67.3 L25.5 64 L27.9 63.7 Z" fill="#444"/>
<path d="M37.5 63.4 H41.4 M43.6 63.4 H47.8 M42.5 58.2 V62.3 M42.5 64.5 V68.8" stroke="#666" stroke-width="1" fill="none"/>
<rect x="52.00" y="55.8" width="1" height="14.0" fill="#7c7c7c"/>
<rect x="53.00" y="55.8" width="0.8" height="14.0" fill="#e9e9e9"/>
<path d="M64.4 59.2 V67.9 M77.8 63.4 H86.2 M94.9 67.9 L103.7 59.4" stroke="#606060" stroke-width="1" fill="none"/>
<path d="M111.2 64.8 L118.2 58.6 M112.4 66.6 L120.2 59.7 M113.8 68 L121 61.6 M118.9 57.8 L117.2 65.8" stroke="#666" stroke-width="0.8" fill="none"/>
<path d="M119.4 66.2 V69.5 M119.4 66.4 H121.8 M119.4 67.85 H121.3 M119.4 69.3 H121.8" stroke="#555" stroke-width="0.8" fill="none"/>
<path d="M129 58.3 H139 M129 60.5 H139 M129 63.5 H139 M129 66.5 H135.5" stroke="#8a8a8a" stroke-width="0.8" stroke-dasharray="1.1 0.7" fill="none"/>
<path d="M135.6 66.1 H139.2 L136.6 69.6 Z" fill="#5a5a5a"/>
<text x="148.4" y="66.8" font-size="8.8px" font-weight="bold" fill="#6a6a6a" textLength="5.9" lengthAdjust="spacingAndGlyphs">A</text>
<rect x="165" y="59.7" width="7.7" height="7.9" fill="#e6e6e6" stroke="#9a9a9a" stroke-width="0.6" stroke-dasharray="1 0.6"/>
<path d="M166.3 61.5 H171.7 V63 H169.9 V67.2 H168.1 V63 H166.3 Z" fill="#5a5a5a"/>
<path d="M163.8 57.9 L166 58.8 L164.7 60 Z" fill="#6a6a6a"/>
<path d="M181.5 61.7 H186.1 L183.8 59.2 Z M186.8 65.2 H191.4 L189.1 67.7 Z" fill="#555"/>
<path d="M183.6 64.6 L185 65.9 L188.6 61.8" stroke="#555" stroke-width="1" fill="none"/>
<path d="M193.90 62.40 L197.40 62.40 L195.65 64.50 Z" fill="#151515"/>
<rect x="201.10" y="55.0" width="1" height="16.0" fill="#ababab"/>
<rect x="202.10" y="55.0" width="0.8" height="16.0" fill="#e9e9e9"/>
<rect x="204.3" y="56.2" width="2.2" height="13.4" fill="#c9c9c9"/>
<line x1="205.4" y1="56.2" x2="205.4" y2="69.6" stroke="#b0b0b0" stroke-width="2" stroke-dasharray="1 1.25"/>
<rect x="226.3" y="55.3" width="15.1" height="14.9" fill="#eeeeee"/>
<rect x="226.3" y="55.3" width="15.1" height="0.9" fill="#8c8c8c"/>
<rect x="226.3" y="55.3" width="0.9" height="14.9" fill="#8c8c8c"/>
<rect x="226.3" y="69.4" width="15.1" height="0.8" fill="#fafafa"/>
<rect x="240.6" y="55.3" width="0.8" height="14.9" fill="#fafafa"/>
<g font-size="6.8px" fill="#5c5c5c">
<text x="212.6" y="65.9" textLength="8.5" lengthAdjust="spacingAndGlyphs">M1</text>
<text x="230.0" y="65.9" textLength="8.8" lengthAdjust="spacingAndGlyphs">M5</text>
<text x="245.8" y="65.9" textLength="12.5" lengthAdjust="spacingAndGlyphs">M15</text>
<text x="263.3" y="65.9" textLength="12.7" lengthAdjust="spacingAndGlyphs">M30</text>
<text x="282.6" y="65.9" textLength="8.2" lengthAdjust="spacingAndGlyphs">H1</text>
<text x="299.5" y="65.9" textLength="8.8" lengthAdjust="spacingAndGlyphs">H4</text>
<text x="317.6" y="65.9" textLength="8.2" lengthAdjust="spacingAndGlyphs">D1</text>
<text x="334.5" y="65.9" textLength="10.0" lengthAdjust="spacingAndGlyphs">W1</text>
<text x="351.0" y="65.9" textLength="10.0" lengthAdjust="spacingAndGlyphs">MN</text>
</g>
<rect x="364.10" y="54.6" width="1" height="16.4" fill="#9c9c9c"/>
<rect x="365.10" y="54.6" width="0.8" height="16.4" fill="#e9e9e9"/>
</g>
</svg></body></html>
